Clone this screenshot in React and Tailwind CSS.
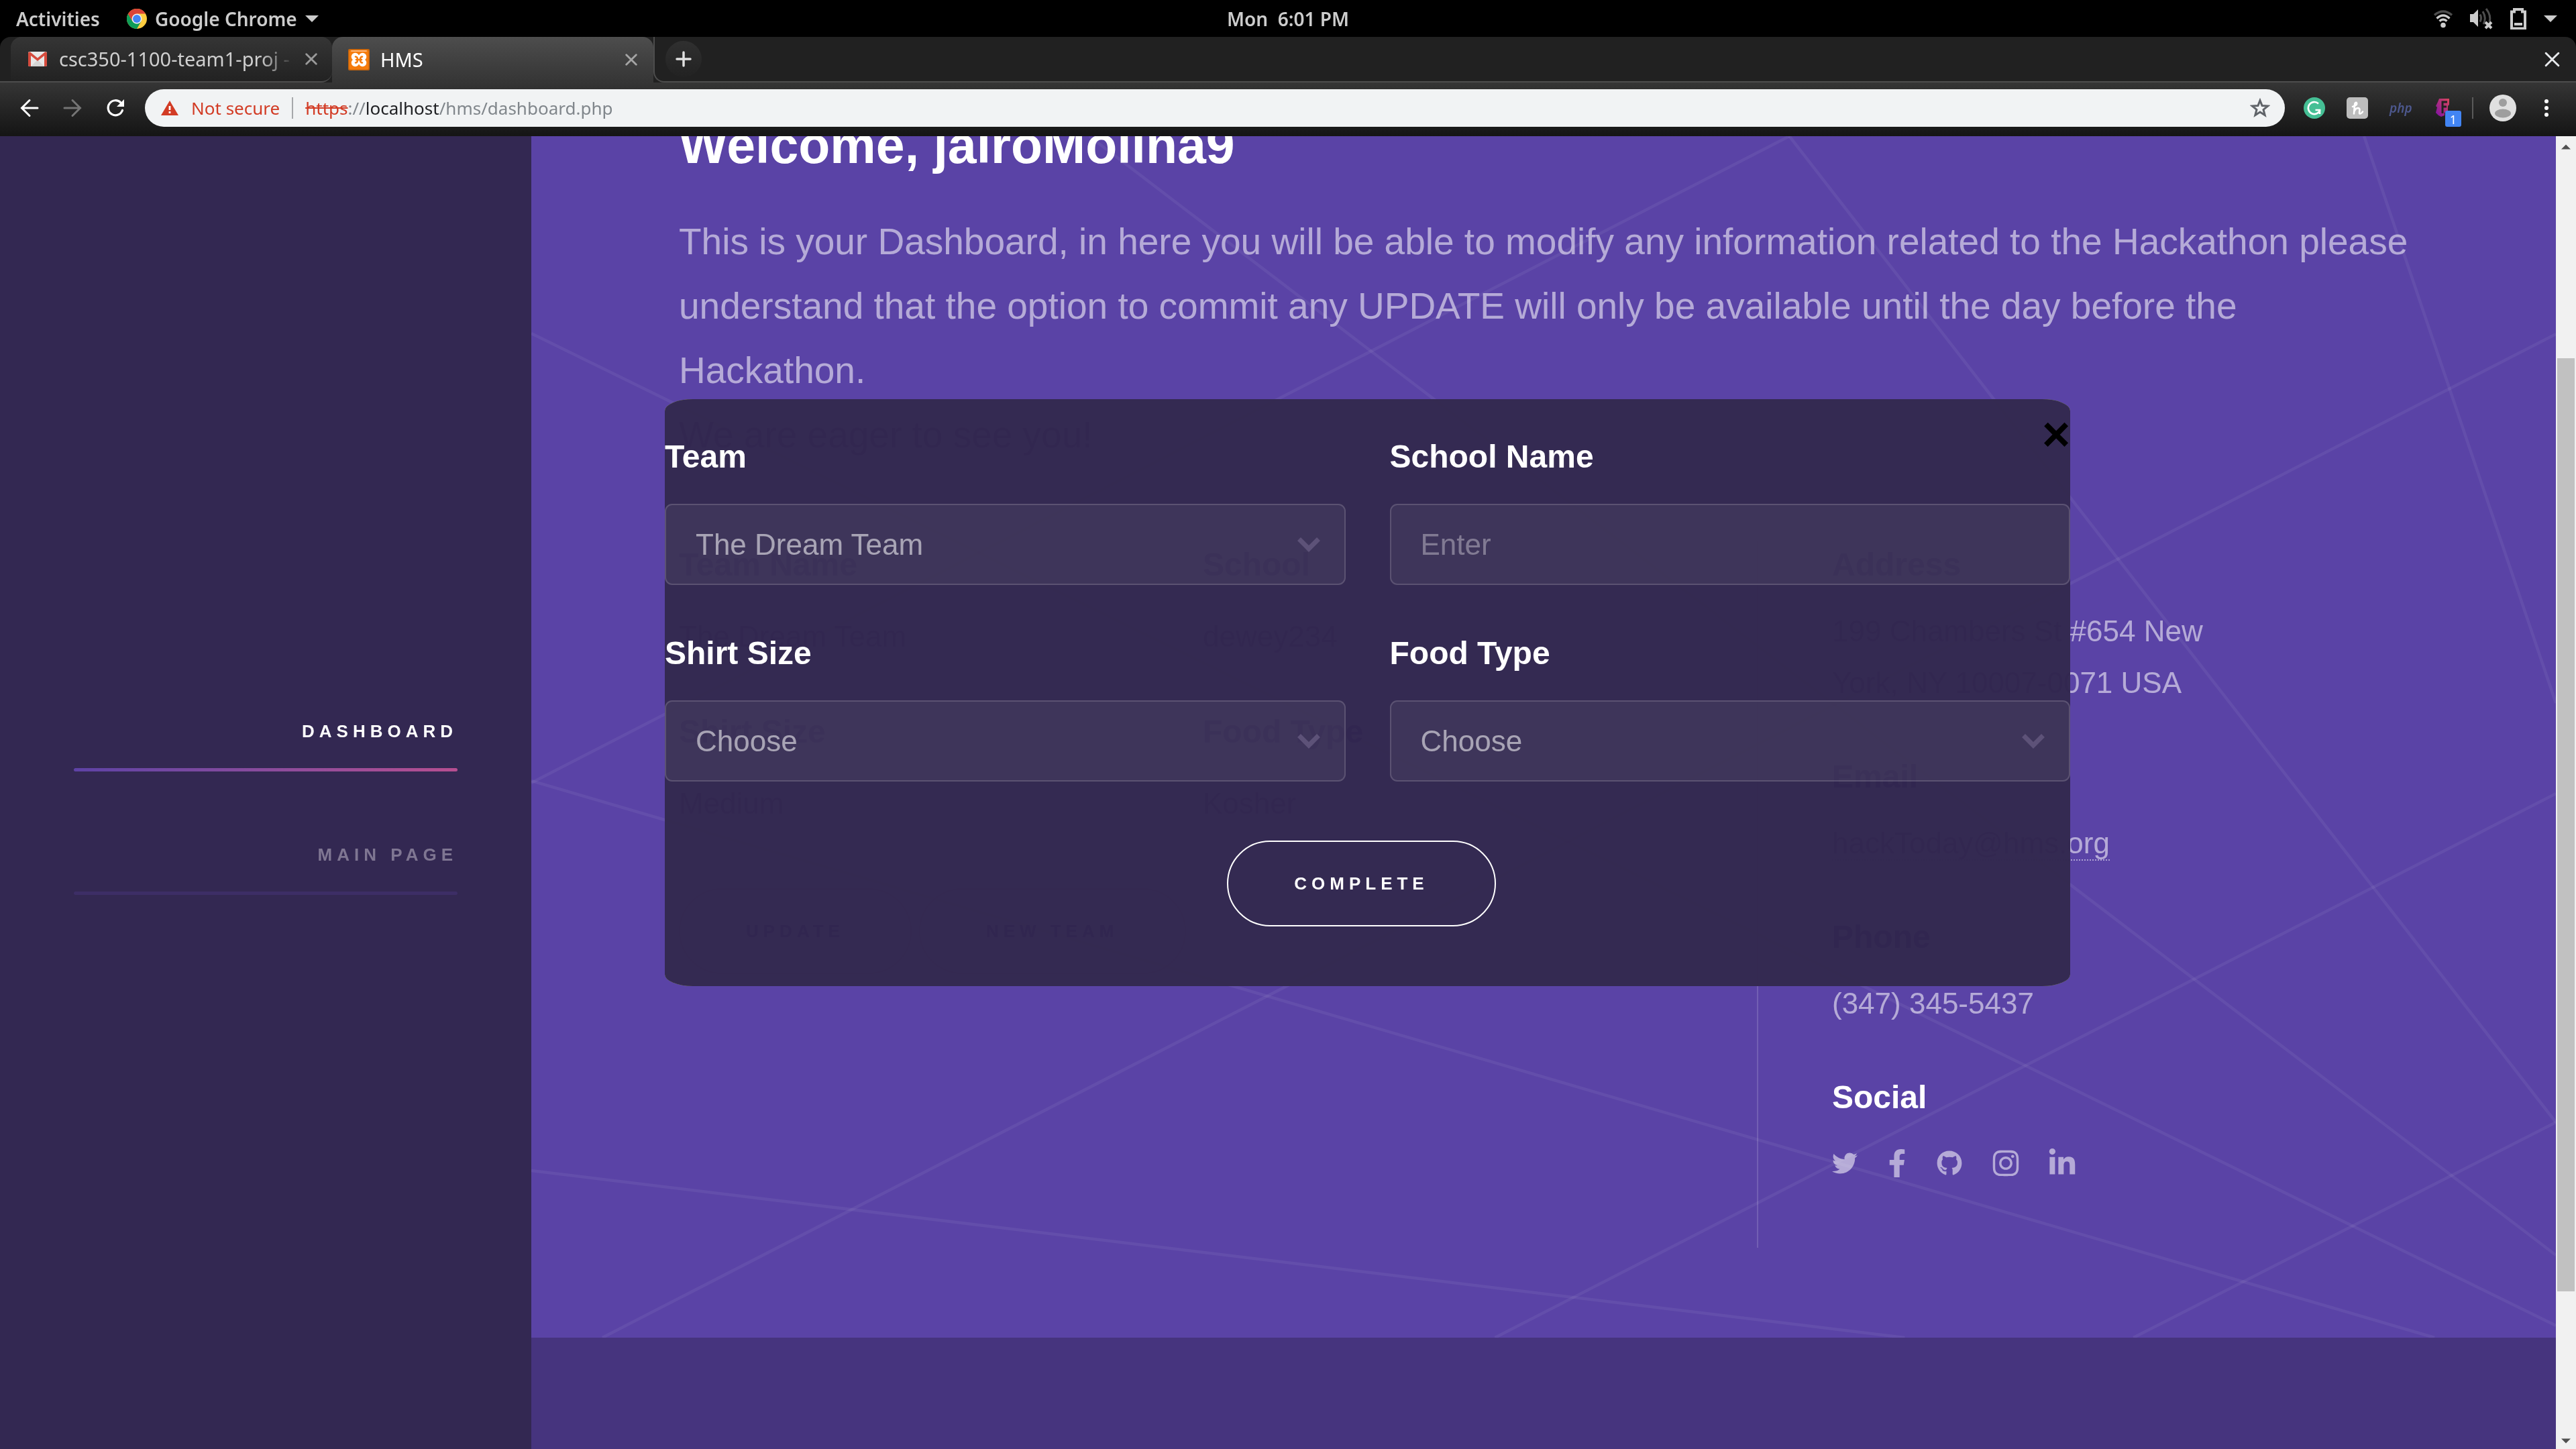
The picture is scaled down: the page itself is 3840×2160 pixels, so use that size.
import React from "react";
import { FaTwitter, FaFacebookF, FaGithub, FaInstagram, FaLinkedinIn } from "react-icons/fa";

const LINES = [
  [832, 0, 3019, 1668],
  [1876, 0, 0, 964],
  [1876, 0, 3019, 1470],
  [2733, 0, 3019, 845],
  [3019, 295, 106, 1791],
  [3019, 980, 1437, 1791],
  [3019, 1470, 2389, 1791],
  [0, 294, 3019, 1773],
  [0, 961, 2838, 1791],
  [0, 1542, 2048, 1791],
];

function ChromeLogo() {
  return (
    <svg viewBox="0 0 48 48" className="size-[30px]" aria-hidden="true">
      <circle cx="24" cy="24" r="24" fill="#ffcd40" />
      <path d="M3.200 12A24 24 0 0 0 24 48L34.400 30 24 24 13.600 30z" fill="#0f9d58" />
      <path d="M3.200 12 13.600 30 24 24V12z" fill="#db4437" />
      <path d="M3.200 12A24 24 0 0 1 44.800 12H24L13.600 30z" fill="#db4437" />
      <circle cx="24" cy="24" r="12" fill="#f1f1f1" />
      <circle cx="24" cy="24" r="9.500" fill="#4285f4" />
    </svg>
  );
}

function Caret({ className }) {
  return (
    <svg viewBox="0 0 20 10" className={className} aria-hidden="true">
      <path d="M0 0h20L10 10z" fill="currentColor" />
    </svg>
  );
}

function Cross({ className, width }) {
  return (
    <svg viewBox="0 0 16 16" className={className} fill="none" stroke="currentColor" strokeWidth={width} strokeLinecap="round" aria-hidden="true">
      <path d="M1.500 1.500 14.500 14.500M14.500 1.500 1.500 14.500" />
    </svg>
  );
}

function SystemBar() {
  return (
    <header className="grid h-[55px] shrink-0 grid-cols-3 items-center bg-black px-6 text-[28px] font-semibold text-[#cccccc]">
      <div className="flex items-center">
        <button type="button">Activities</button>
        <button type="button" className="ml-10 flex items-center gap-3">
          <ChromeLogo />
          Google Chrome
          <Caret className="h-[10px] w-5" />
        </button>
      </div>
      <time className="whitespace-pre text-center">Mon  6:01 PM</time>
      <div className="flex items-center justify-end gap-[26px] pr-1">
        <svg viewBox="0 0 28 28" className="size-7" fill="none" strokeWidth="3.400" aria-label="Wi-Fi">
          <path d="M1 8.500Q14-2.500 27 8.500" stroke="#4d4d4d" />
          <path d="M4.500 13.500Q14 4.500 23.500 13.500" stroke="#ccc" />
          <path d="M8.500 17.500Q14 12.500 19.500 17.500" stroke="#ccc" />
          <circle cx="14" cy="23.500" r="3.800" fill="#ccc" />
        </svg>
        <svg viewBox="0 0 34 32" className="h-8 w-[34px]" fill="none" aria-label="Volume muted">
          <path d="M0 9h5l7-7v26l-7-7H0z" fill="#ccc" />
          <g stroke="#4d4d4d" strokeWidth="3">
            <path d="M15 9.500q3 5.500 0 11M19 5q6 10 1 19M24 1q8 10 5 20" />
          </g>
          <path d="M23 21l9 9M32 21l-9 9" stroke="#ccc" strokeWidth="4" />
        </svg>
        <svg viewBox="0 0 24 32" className="h-8 w-6" aria-label="Battery">
          <path d="M2 5.500h4V2h12v3.500h4v25H2z" fill="none" stroke="#ccc" strokeWidth="4" />
          <path d="M6 22h12v4H6z" fill="#ccc" />
        </svg>
        <Caret className="h-[10px] w-5" />
      </div>
    </header>
  );
}

function TabStrip() {
  return (
    <div className="flex h-[68px] shrink-0 items-stretch rounded-t-2xl bg-[#212121] text-[29px]">
      <div className="w-4 border-b-2 border-[#4d4d4d]" />
      <div className="flex w-[479px] items-center rounded-t-2xl rounded-br-2xl border-b-2 border-[#4d4d4d] bg-linear-to-b from-[#353535] to-[#222222] pr-[22px] pl-[26px] text-[#d0d0d0]">
        <svg viewBox="0 0 28 22" className="h-[22px] w-7 shrink-0" aria-hidden="true">
          <path d="M0 2a2 2 0 0 1 2-2h24a2 2 0 0 1 2 2v18a2 2 0 0 1-2 2H2a2 2 0 0 1-2-2z" fill="#e8e8e8" />
          <path d="M4 22 14 12l10 10z" fill="#d5d5d5" />
          <path d="M0 2v18a2 2 0 0 0 2 2h2V6l10 8 10-8v16h2a2 2 0 0 0 2-2V2Q27-.500 25 .500L14 9.500 3 .500Q1-.500 0 2z" fill="#d54b3d" />
        </svg>
        <span className="ml-[18px] w-[352px] overflow-hidden whitespace-nowrap mask-r-from-85%">csc350-1100-team1-proj -</span>
        <button type="button" aria-label="Close tab" className="ml-auto text-[#9a9a9a]">
          <Cross className="size-[18px]" width="2.500" />
        </button>
      </div>
      <div className="flex w-[479px] items-center rounded-t-2xl bg-linear-to-b from-[#4d4d4d] to-[#353535] px-6 text-white">
        <svg viewBox="0 0 32 32" className="size-8 shrink-0" aria-hidden="true">
          <rect width="32" height="32" rx="2" fill="#c4640c" />
          <rect x="1.500" y="1.500" width="29" height="29" rx="2" fill="#f57c0c" />
          <rect x="4" y="2" width="24" height="2" rx="1" fill="#ffb777" />
          <g fill="#fff">
            <circle cx="10.500" cy="11.500" r="5.800" />
            <circle cx="21.500" cy="11.500" r="5.800" />
            <circle cx="10.500" cy="20.500" r="5.800" />
            <circle cx="21.500" cy="20.500" r="5.800" />
            <path d="M10 9.500h12v13H10z" />
          </g>
          <path d="M14 5h4l-2 4zM14 27h4l-2-4z" fill="#f57c0c" />
          <path d="M11 11.500q3 0 3 4.500t-3 4.500M21 11.500q-3 0-3 4.500t3 4.500M12 16h8" fill="none" stroke="#f57c0c" strokeWidth="2.600" strokeLinecap="round" />
        </svg>
        <span className="ml-4">HMS</span>
        <button type="button" aria-label="Close tab" className="ml-auto text-[#a5a5a5]">
          <Cross className="size-[18px]" width="2.500" />
        </button>
      </div>
      <div className="flex flex-1 items-center justify-between rounded-bl-2xl border-b-2 border-l-2 border-[#4d4d4d] pr-6 pl-4">
        <button type="button" aria-label="New tab" className="grid size-[54px] place-items-center rounded-full bg-linear-to-b from-[#303030] to-[#222222]">
          <svg viewBox="0 0 24 24" className="size-6" stroke="#e0e0e0" strokeWidth="3.500" strokeLinecap="round" aria-hidden="true">
            <path d="M12 2v20M2 12h20" />
          </svg>
        </button>
        <button type="button" aria-label="Close window" className="text-[#e8eaed]">
          <Cross className="size-[23px]" width="2" />
        </button>
      </div>
    </div>
  );
}

function Toolbar() {
  return (
    <div className="flex h-20 shrink-0 items-center bg-linear-to-b from-[#353535] to-[#151515] pb-1 pl-[30px] text-[26px]">
      <button type="button" aria-label="Back">
        <svg viewBox="0 0 28 28" className="size-7" fill="none" stroke="#fff" strokeWidth="3" strokeLinecap="round" aria-hidden="true">
          <path d="M26 14H3M14 2.500 2.500 14 14 25.500" />
        </svg>
      </button>
      <button type="button" aria-label="Forward" className="ml-9">
        <svg viewBox="0 0 28 28" className="size-7" fill="none" stroke="#757575" strokeWidth="3" strokeLinecap="round" aria-hidden="true">
          <path d="M2 14h23M14 2.500 25.500 14 14 25.500" />
        </svg>
      </button>
      <button type="button" aria-label="Reload" className="ml-9">
        <svg viewBox="0 0 28 28" className="size-7" aria-hidden="true">
          <path d="M24.500 17.500A11 11 0 1 1 22 6" fill="none" stroke="#fff" strokeWidth="3.200" strokeLinecap="round" />
          <path d="M27 1v11H16z" fill="#fff" />
        </svg>
      </button>
      <div className="ml-[30px] flex h-14 flex-1 items-center rounded-full bg-[#f1f3f4] pr-[22px] pl-6">
        <svg viewBox="0 0 26 22" className="h-[22px] w-[26px]" aria-hidden="true">
          <path d="M13 0 26 22H0z" fill="#d23b24" />
          <path d="M11.600 8h2.800v6h-2.800zM11.600 16h2.800v3h-2.800z" fill="#fff" />
        </svg>
        <span className="ml-[19px] text-[#d23b24]">Not secure</span>
        <span className="ml-[18px] h-8 w-0.5 bg-[#a6a8ab]" />
        <span className="ml-[18px] flex-1 text-[#80868b]">
          <span className="text-[#d23b24] line-through">https</span>://<span className="text-[#202124]">localhost</span>/hms/dashboard.php
        </span>
        <button type="button" aria-label="Bookmark this page">
          <svg viewBox="0 0 28 28" className="size-[30px]" fill="none" stroke="#5f6368" strokeWidth="2.800" aria-hidden="true">
            <path d="M14 3.500 16.900 10.800 24.800 11.300 18.700 16.300 20.700 24 14 19.700 7.300 24 9.300 16.300 3.200 11.300 11.100 10.800z" />
          </svg>
        </button>
      </div>
      <div className="ml-7 flex items-center">
        <svg viewBox="0 0 32 32" className="size-8" aria-label="Grammarly">
          <circle cx="16" cy="16" r="16" fill="#45bf95" />
          <path d="M22 9.500A9 9 0 1 0 24.500 18.500M17.500 19h6.500v6" fill="none" stroke="#fff" strokeWidth="2.600" />
        </svg>
        <svg viewBox="0 0 32 32" className="ml-8 size-8" aria-label="Honey">
          <rect width="32" height="32" rx="5" fill="#bdbdbd" />
          <path d="M9 14c4-1 7-3 6-5.500-1-1.500-3 0-3 3l-1 13M12 20c2-5 8-5 7.500-1s-1 6 1 5.500 3-2 3.500-3" fill="none" stroke="#fff" strokeWidth="2.600" strokeLinecap="round" />
        </svg>
        <span className="ml-8 w-8 text-[19px] font-semibold text-[#4d588e] italic">php</span>
        <span className="relative ml-9 flex h-8 w-10 items-center">
          <svg viewBox="0 0 22 32" className="h-8 w-[22px]" aria-hidden="true">
            <defs>
              <linearGradient id="flow" x1="1" y1="0" x2="0" y2="1">
                <stop offset="0" stopColor="#d8475a" />
                <stop offset="1" stopColor="#7d0fa8" />
              </linearGradient>
            </defs>
            <path d="M6 2h15v9l-2 2v7l-5 3v4l-5 2-4-2-4-4 2-8-2-2 3-6z" fill="url(#flow)" />
            <path d="M11 24V7h7M11 14h6" fill="none" stroke="#222" strokeWidth="3" />
          </svg>
          <span className="absolute top-5 left-[15px] grid size-6 place-items-center rounded-[3px] bg-[#4285f4] text-[18px] text-white">1</span>
        </span>
        <span className="ml-[15px] h-8 w-0.5 bg-[#5a5a5a]" />
        <svg viewBox="0 0 40 40" className="ml-6 size-10" aria-label="Profile">
          <circle cx="20" cy="20" r="20" fill="#e0e0e0" />
          <circle cx="20" cy="12" r="6" fill="#9e9e9e" />
          <ellipse cx="20" cy="28" rx="12" ry="6.500" fill="#9e9e9e" />
        </svg>
        <button type="button" aria-label="Menu" className="mr-[41px] ml-[42px] flex w-[6px] flex-col gap-1">
          <span className="size-[6px] rounded-full bg-white" />
          <span className="size-[6px] rounded-full bg-white" />
          <span className="size-[6px] rounded-full bg-white" />
        </button>
      </div>
    </div>
  );
}

function Sidebar() {
  return (
    <nav className="flex w-[792px] shrink-0 flex-col justify-center gap-[102px] bg-[#332852] px-[110px] pt-[38px] text-right text-[26px] leading-[45px] font-bold tracking-[7px] uppercase">
      <a href="#dashboard" className="text-white">
        Dashboard
        <span className="mt-8 block h-[5px] rounded-full bg-linear-to-r from-[#5e42a6] to-[#b74e91]" />
      </a>
      <a href="#main" className="text-[#7f7692]">
        Main page
        <span className="mt-8 block h-[5px] rounded-full bg-[#3d2e66]" />
      </a>
    </nav>
  );
}

function Fact({ title, children }) {
  return (
    <div>
      <h3 className="text-[48px] leading-[72px] font-bold text-white">{title}</h3>
      <p className="mt-8 text-[44px] leading-[77px]">{children}</p>
    </div>
  );
}

function Contact({ title, children }) {
  return (
    <div>
      <h3 className="text-[48px] leading-[72px] font-bold text-white">{title}</h3>
      <p className="mt-6 text-[44px] leading-[77px]">{children}</p>
    </div>
  );
}

const PILL = "h-32 rounded-full border-2 px-[98px] text-[26px] font-bold tracking-[7px] text-white uppercase";

function Field({ id, label, children }) {
  return (
    <div>
      <label htmlFor={id} className="block text-[48px] leading-[72px] font-bold text-white">
        {label}
      </label>
      <div className="relative mt-[34px] h-[121px]">{children}</div>
    </div>
  );
}

const BOX = "size-full appearance-none rounded-[11px] border-2 border-white/15 bg-white/5 px-11 text-[44px] text-white/55 outline-none";

function Choice({ id, label, value }) {
  return (
    <Field id={id} label={label}>
      <select id={id} defaultValue={value} className={BOX}>
        <option>{value}</option>
      </select>
      <svg viewBox="0 0 34 22" className="pointer-events-none absolute top-[50px] right-[38px] h-[22px] w-[34px]" fill="none" stroke="#5d5278" strokeWidth="7" aria-hidden="true">
        <path d="M2.500 2.500 17 17 31.500 2.500" />
      </svg>
    </Field>
  );
}

function UpdateDialog() {
  return (
    <form
      role="dialog"
      aria-label="Update team"
      className="absolute top-[392px] right-[724px] left-[199px] h-[875px] rounded-[2%] bg-[#322752]/98 pt-[50px] backdrop-invert"
    >
      <button type="button" aria-label="Close" className="absolute top-2 right-0 text-[72px] leading-[88px] font-bold text-black">
        ×
      </button>
      <div className="grid grid-cols-2 gap-x-[66px] gap-y-[66px]">
        <Choice id="team" label="Team" value="The Dream Team" />
        <Field id="school" label="School Name">
          <input id="school" type="text" placeholder="Enter" className="size-full rounded-[11px] border-2 border-white/15 bg-white/5 px-11 text-[44px] text-white outline-none placeholder:text-white/35" />
        </Field>
        <Choice id="shirt" label="Shirt Size" value="Choose" />
        <Choice id="food" label="Food Type" value="Choose" />
      </div>
      <div className="mt-[88px] flex justify-center pr-[18px]">
        <button type="submit" className={PILL + " border-white"}>
          Complete
        </button>
      </div>
    </form>
  );
}

const SOCIAL = [
  ["Twitter", FaTwitter, "w-[38px] text-[38px]"],
  ["Facebook", FaFacebookF, "w-[26px] text-[42px]"],
  ["GitHub", FaGithub, "w-[38px] text-[38px]"],
  ["Instagram", FaInstagram, "w-[38px] text-[44px]"],
  ["LinkedIn", FaLinkedinIn, "w-[38px] text-[44px]"],
];

function Dashboard() {
  return (
    <section className="relative h-[1791px] shrink-0 overflow-hidden bg-[#5a43a6] pr-[205px] pl-[220px] text-white/55">
      <svg viewBox="0 0 3019 1791" preserveAspectRatio="none" className="absolute inset-0 size-full" stroke="#fff" strokeOpacity="0.06" strokeWidth="4.500" aria-hidden="true">
        {LINES.map(([x1, y1, x2, y2], i) => (
          <line key={i} x1={x1} y1={y1} x2={x2} y2={y2} />
        ))}
      </svg>
      <div className="relative">
        <h1 className="-mt-[45px] text-[77px] leading-[116px] font-bold text-white">Welcome, jairoMolina9</h1>
        <p className="mt-[38px] text-[55px] leading-[96px]">
          This is your Dashboard, in here you will be able to modify any information related to the Hackathon please understand that the option to commit any UPDATE will only be available until the day before the Hackathon.
          <br />
          We are eager to see you!
        </p>
        <div className="mt-[110px] flex">
          <div className="w-[1609px] shrink-0 border-r-2 border-white/15">
            <div className="grid grid-cols-[715px_715px] gap-x-[66px] gap-y-[68px]">
              <Fact title="Team Name">The Dream Team</Fact>
              <Fact title="School">dewey234</Fact>
              <Fact title="Shirt Size">Medium</Fact>
              <Fact title="Food Type">Kosher</Fact>
            </div>
            <div className="mt-[88px] flex gap-[11px]">
              <button type="button" className={PILL + " border-white/15"}>
                Update
              </button>
              <button type="button" className={PILL + " border-white/15"}>
                New team
              </button>
            </div>
          </div>
          <address className="flex h-[1054px] flex-1 flex-col gap-y-[66px] pl-[110px] not-italic">
            <Contact title="Address">
              199 Chambers St #654 New
              <br />
              York, NY 10007-0071 USA
            </Contact>
            <Contact title="Email">
              <a href="mailto:hackToday@hms.org" className="border-b-2 border-dotted border-white/50">
                hackToday@hms.org
              </a>
            </Contact>
            <Contact title="Phone">(347) 345-5437</Contact>
            <div>
              <h3 className="text-[48px] leading-[72px] font-bold text-white">Social</h3>
              <ul className="mt-10 flex h-11 items-center gap-[46px]">
                {SOCIAL.map(([name, Icon, size]) => (
                  <li key={name}>
                    <a href={"#" + name} aria-label={name} className={"flex justify-center " + size}>
                      <Icon className="shrink-0" />
                    </a>
                  </li>
                ))}
              </ul>
            </div>
          </address>
        </div>
      </div>
      <UpdateDialog />
    </section>
  );
}

function ScrollBar() {
  return (
    <div className="flex w-[30px] shrink-0 flex-col items-center bg-[#f1f1f1] text-[#505050]" aria-hidden="true">
      <Caret className="mt-3 h-2 w-[14px] rotate-180" />
      <div className="mt-[311px] h-[1391px] w-[26px] bg-[#c1c1c1]" />
      <Caret className="mt-auto mb-2 h-2 w-[14px]" />
    </div>
  );
}

export default function App() {
  return (
    <div className="flex h-screen flex-col overflow-hidden bg-black font-['Noto_Sans',sans-serif]">
      <SystemBar />
      <TabStrip />
      <Toolbar />
      <div className="flex min-h-0 flex-1 font-['Liberation_Sans',sans-serif]">
        <Sidebar />
        <main className="flex min-w-0 flex-1 flex-col overflow-hidden">
          <Dashboard />
          <footer className="flex-1 bg-[#46347e]" />
        </main>
        <ScrollBar />
      </div>
    </div>
  );
}
